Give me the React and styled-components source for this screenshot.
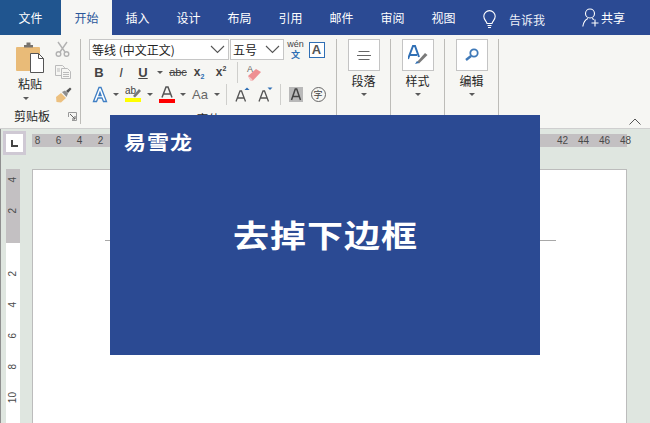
import React from "react";
import styled, { createGlobalStyle } from "styled-components";

const cjk = `"Noto Sans CJK SC", "Liberation Sans", sans-serif`;

const Global = createGlobalStyle`
  html, body { margin: 0; padding: 0; background: #fff; }
  body { font-family: ${cjk}; }
`;

const Frame = styled.div`
  position: relative;
  width: 650px;
  height: 423px;
  overflow: hidden;
  display: flex;
  flex-direction: column;
`;

const TabBar = styled.div`
  height: 35px;
  flex: none;
  display: flex;
  background: #2b4a93;
  color: #fff;
  font-size: 12px;
`;

const Tab = styled.div`
  width: ${(p) => (p.$file ? 61 : 51)}px;
  display: flex;
  align-items: center;
  justify-content: center;
  box-sizing: border-box;
  background: ${(p) => (p.$file ? "#20558f" : p.$active ? "#f6f6f4" : "transparent")};
  color: ${(p) => (p.$active ? "#2b579a" : "#fff")};
`;

const TellMe = styled.div`
  margin-left: 14px;
  display: flex;
  align-items: center;
  gap: 13px;
  padding-top: 3px;
  color: #eef1f8;
`;

const Share = styled.div`
  margin-left: 37px;
  display: flex;
  align-items: center;
  gap: 2px;
`;

const Ribbon = styled.div`
  height: 94px;
  flex: none;
  box-sizing: border-box;
  padding-top: 4px;
  display: flex;
  background: #f6f6f3;
  border-bottom: 1px solid #cfcfcf;
`;

const Group = styled.div`
  width: ${(p) => p.$w}px;
  height: 85px;
  box-sizing: border-box;
  flex: none;
  border-right: 1px solid #bdbcb8;
  display: flex;
  flex-direction: column;
  align-items: center;
  color: #262626;
`;

const ClipGroup = styled(Group)`
  display: grid;
  grid-template-columns: 52px 28px;
  grid-template-rows: 69px 16px;
  justify-items: center;
  align-items: start;
`;

const PasteButton = styled.div`
  display: flex;
  flex-direction: column;
  align-items: center;
  width: 52px;
  padding-top: 2px;
  margin-left: 8px;
  font-size: 12px;
  line-height: 18px;
`;

const PasteLabel = styled.span`
  margin-top: 2px;
`;

const PasteCaret = styled.div`
  margin-top: 4px;
  margin-right: 8px;
`;

const SmallTools = styled.div`
  display: flex;
  flex-direction: column;
  gap: 8px;
  padding-top: 2px;
  margin-left: -6px;
`;

const ClipFooter = styled.div`
  grid-column: 1 / 3;
  width: 100%;
  display: flex;
  justify-content: space-between;
  align-items: center;
  box-sizing: border-box;
  padding: 0 3px 0 14px;
  font-size: 12px;
  line-height: 16px;
`;

const FontGroup = styled(Group)`
  align-items: stretch;
  padding-left: 8px;
`;

const ComboRow = styled.div`
  display: flex;
  align-items: center;
  height: 21px;
`;

const Combo = styled.div`
  width: ${(p) => p.$w}px;
  height: 21px;
  box-sizing: border-box;
  display: flex;
  align-items: center;
  justify-content: space-between;
  padding: 0 3px 0 2px;
  margin-right: 1px;
  background: #fff;
  border: 1px solid #c6c6c6;
  font-size: 12px;
  color: #222;
  white-space: nowrap;
`;

const ToolRow = styled.div`
  display: flex;
  align-items: center;
  height: 23px;
  margin-top: ${(p) => p.$top || 0}px;
`;

const Cell = styled.div`
  width: ${(p) => p.$w}px;
  height: 22px;
  flex: none;
  display: flex;
  align-items: center;
  justify-content: center;
`;

const Glyph = styled.span`
  font-family: "Liberation Sans", sans-serif;
  font-size: ${(p) => p.$size || 13}px;
  font-weight: ${(p) => (p.$bold ? 700 : 400)};
  font-style: ${(p) => (p.$italic ? "italic" : "normal")};
  text-decoration: ${(p) => p.$line || "none"};
  color: ${(p) => p.$color || "#444"};
`;

const Sub = styled.sub`
  font-size: 7px;
  color: #2b6cb0;
  line-height: 0;
`;

const Sup = styled.sup`
  font-size: 7px;
  color: #444;
  line-height: 0;
`;

const Caret = styled.span`
  display: block;
  flex: none;
  width: 0;
  height: 0;
  border-left: 3px solid transparent;
  border-right: 3px solid transparent;
  border-top: 3px solid #5a5a5a;
`;

const ToolDivider = styled.div`
  width: 1px;
  height: 21px;
  flex: none;
  background: #cfcfcc;
`;

const FontLabel = styled.div`
  text-align: center;
  font-size: 12px;
  margin-top: 6px;
  padding-right: 8px;
  line-height: 16px;
`;

const BigBox = styled.div`
  width: 32px;
  height: 32px;
  box-sizing: border-box;
  background: #fff;
  border: 1px solid #c4c4c4;
  display: flex;
  align-items: center;
  justify-content: center;
`;

const BigLabel = styled.div`
  font-size: 12px;
  line-height: 18px;
  margin: 1px 0 3px;
`;

const Collapse = styled.div`
  display: flex;
  margin: 79px 0 0 auto;
  padding-right: 9px;
  height: 7px;
`;

const Work = styled.div`
  flex: 1;
  min-height: 0;
  display: grid;
  grid-template-columns: 31px 595px 1fr;
  grid-template-rows: 40px 1fr;
  background: #dfe6e0;
  border-left: 1px solid #8f8f8f;
`;

const Corner = styled.div`
  padding: 2px 0 0 2px;
`;

const TabStop = styled.div`
  width: 23px;
  height: 24px;
  box-sizing: border-box;
  border: 3px solid #cfc9d4;
  background: #fff;
  display: flex;
  align-items: center;
  justify-content: center;
`;

const HRuler = styled.div`
  grid-column: 2 / 4;
  width: 595px;
  height: 13px;
  margin-top: 5px;
  background: #c3c0c2;
  display: flex;
`;

const HTick = styled.div`
  width: 21px;
  flex: none;
  margin-left: ${(p) => (p.$first ? -5 : 0)}px;
  text-align: center;
  font: 10px/13px "Liberation Sans", sans-serif;
  color: #4a4a4a;
`;

const VRuler = styled.div`
  width: 14px;
  margin-left: 5px;
  height: 260px;
  background: linear-gradient(#c3c0c2 74px, #fff 74px);
  display: flex;
  flex-direction: column;
  align-items: center;
`;

const VTick = styled.div`
  height: 31.2px;
  flex: none;
  margin-top: ${(p) => (p.$first ? -5 : 0)}px;
  display: flex;
  align-items: center;
  justify-content: center;
  font: 10px/1 "Liberation Sans", sans-serif;
  color: #4a4a4a;
  transform: rotate(-90deg);
`;

const Page = styled.div`
  grid-column: 2;
  width: 595px;
  height: 260px;
  box-sizing: border-box;
  background: #fff;
  border: 1px solid #bcbcbc;
  padding: 70px 0 0 72px;
`;

const HeaderRule = styled.div`
  width: 451px;
  height: 1px;
  background: #a8a8a8;
`;

const Cover = styled.div`
  position: absolute;
  left: 110px;
  top: 115px;
  width: 430px;
  height: 240px;
  background: #2b4a93;
  color: #fff;
  font-family: ${cjk};
  font-weight: 700;
`;

const Logo = styled.div`
  position: absolute;
  left: 14px;
  top: 10px;
  font-size: 22px;
  line-height: 32px;
  letter-spacing: 1px;
  transform: scaleY(0.9);
`;

const Headline = styled.div`
  position: absolute;
  left: 0;
  right: 0;
  top: 91px;
  text-align: center;
  font-size: 36px;
  line-height: 54px;
  letter-spacing: 1px;
  padding-left: 1px;
  transform: scaleY(0.85);
`;

const Chevron = ({ size = 15 }) => (
  <svg width={size} height="9" viewBox="0 0 15 9">
    <path d="M1 1l6.5 6.5L14 1" fill="none" stroke="#555" strokeWidth="1.1" />
  </svg>
);

const PasteIcon = () => (
  <svg width="30" height="32" viewBox="0 0 30 32">
    <rect x="1" y="6" width="24" height="24" rx="1" fill="#e9bb78" />
    <path d="M9 6V4h2.500V1.500h4V4H18v2.500H9z" fill="#77736e" />
    <path d="M15.500 12.500h8l5 5v14h-13z" fill="#fff" stroke="#555" />
    <path d="M23.500 12.500v5h5" fill="none" stroke="#555" />
  </svg>
);

const Scissors = () => (
  <svg width="15" height="16" viewBox="0 0 15 16" fill="none" stroke="#b2b2b2" strokeWidth="1.4">
    <path d="M3 1l7 10M12 1L5 11" />
    <circle cx="3.500" cy="13" r="2.300" />
    <circle cx="11.500" cy="13" r="2.300" />
  </svg>
);

const CopyIcon = () => (
  <svg width="16" height="14" viewBox="0 0 16 14" fill="#f6f6f3" stroke="#bbb">
    <path d="M.5.500h7l2 2v8h-9z" />
    <path d="M6.500 3.500h6l3 3v7h-9z" />
    <path d="M8 7.500h6M8 9.500h6M8 11.500h6M2 4h3M2 6h3" />
  </svg>
);

const Painter = () => (
  <svg width="17" height="16" viewBox="0 0 17 16">
    <path d="M1 10l5-4 5 5-5 4.500L1.500 15z" fill="#ecc07f" />
    <path d="M7 5l3-1.500 3 3L11.500 10z" fill="#8e8e8e" />
    <path d="M11 4l4-3.500 1.500 1.500-3.500 4z" fill="#555" />
  </svg>
);

const DialogMark = () => (
  <svg width="9" height="9" viewBox="0 0 9 9" fill="none" stroke="#666">
    <path d="M.5 5V.5h8v8H4" stroke="#999" />
    <path d="M2 2l5 5M7 4v3H4" />
  </svg>
);

const TextEffect = () => (
  <svg width="16" height="17" viewBox="0 0 16 17">
    <path d="M1.500 15.500L7 1.500h2l5.500 14h-3L10 12H6l-1.500 3.500zM6.900 9.500h2.200L8 6.500z" fill="#fff" stroke="#3f7fc4" strokeWidth="1.300" />
  </svg>
);

const Highlight = () => (
  <svg width="17" height="18" viewBox="0 0 17 18">
    <text x="0" y="9" fontFamily="Liberation Sans" fontSize="10" fill="#444">ab</text>
    <path d="M8 11l6-7 2 2-6 6.500z" fill="#777" />
    <rect x="0" y="13" width="16" height="4" fill="#ffff00" />
  </svg>
);

const FontColor = () => (
  <svg width="16" height="17" viewBox="0 0 16 17">
    <path d="M3 11.500L7 1h2l4 10.500M4.700 8h6.600" fill="none" stroke="#555" strokeWidth="1.500" />
    <rect x="0" y="13" width="16" height="4" fill="#f00" />
  </svg>
);

const Eraser = () => (
  <svg width="17" height="17" viewBox="0 0 17 17">
    <text x="1" y="8" fontFamily="Liberation Sans" fontSize="9" fill="#666">A</text>
    <path d="M2 12l8-7 5 3-8 8.500H4.500z" fill="#ee8f92" />
    <path d="M2 12l3 2 2 2.500H4.500z" fill="#f7c9c9" />
  </svg>
);

const SizeStep = ({ up }) => (
  <svg width="15" height="15" viewBox="0 0 15 15">
    <path d="M1 14.500L5 4h1.500l4 10.500M2.500 11h6.500" fill="none" stroke="#555" strokeWidth="1.300" />
    <path d={up ? "M9.500 3l2.500-2.500L14.500 3z" : "M9.500.5l2.500 2.500L14.500.5z"} fill="#2f6fb5" />
  </svg>
);

const ShadedA = () => (
  <svg width="14" height="15" viewBox="0 0 14 15">
    <rect width="14" height="15" fill="#b9b9b9" />
    <path d="M2.500 13L6.300 2h1.400l3.800 11M4 9.500h6" fill="none" stroke="#444" strokeWidth="1.500" />
  </svg>
);

const CircledChar = styled.span`
  width: 15px;
  height: 15px;
  box-sizing: border-box;
  border: 1px solid #666;
  border-radius: 50%;
  display: flex;
  align-items: center;
  justify-content: center;
  font-size: 9px;
  color: #444;
`;

const Phonetic = styled.div`
  display: flex;
  flex-direction: column;
  align-items: center;
  line-height: 9px;
  font-size: 9px;
  color: #444;
  font-family: "Liberation Sans", sans-serif;
`;

const PhoneticChar = styled.span`
  color: #2f6fb5;
  font-family: ${cjk};
  font-weight: 700;
  line-height: 11px;
`;

const BoxedA = styled.div`
  width: 16px;
  height: 16px;
  box-sizing: border-box;
  border: 1px solid #2f6fb5;
  background: #fff;
  display: flex;
  align-items: center;
  justify-content: center;
  font: 700 13px "Liberation Sans", sans-serif;
  color: #555;
`;

const AlignIcon = () => (
  <svg width="14" height="9" viewBox="0 0 14 9" stroke="#666">
    <path d="M1.500 .5h11M0 4.500h14M1.500 8.500h11" />
  </svg>
);

const StylesIcon = () => (
  <svg width="20" height="20" viewBox="0 0 20 20">
    <path d="M0 14L5 1h2l4 11M2 10h7" fill="none" stroke="#2f6fb5" strokeWidth="2" />
    <path d="M9 17l8-9 2.500 2-8.500 8.500z" fill="#7a7a7a" />
    <path d="M7 19l2-3 2 2z" fill="#2f6fb5" />
  </svg>
);

const SearchIcon = () => (
  <svg width="14" height="14" viewBox="0 0 14 14" fill="none">
    <circle cx="9" cy="5" r="3.700" stroke="#3f79b8" strokeWidth="1.800" />
    <path d="M6 8l-5 4" stroke="#3f79b8" strokeWidth="2.500" />
  </svg>
);

const Bulb = () => (
  <svg width="13" height="19" viewBox="0 0 13 19" fill="none" stroke="#fff" strokeWidth="1.100">
    <path d="M4 13.500C3.500 11 .8 10 .8 6.300a5.700 5.700 0 0 1 11.400 0C12.200 10 9.500 11 9 13.500z" />
    <path d="M4.500 15.500h4M5 17.500h3" />
  </svg>
);

const Person = () => (
  <svg width="17" height="19" viewBox="0 0 17 19" fill="none" stroke="#fff" strokeWidth="1.100">
    <circle cx="8" cy="5.500" r="4.500" />
    <path d="M.8 18.500C1.500 14 3.500 11.500 6 10.500M10 10.500l2 1M13 11.500v7M9.500 15h7" />
  </svg>
);

const CollapseIcon = () => (
  <svg width="12" height="7" viewBox="0 0 12 7">
    <path d="M.5 6.500L6 1l5.500 5.500" fill="none" stroke="#555" />
  </svg>
);

const LMark = () => (
  <svg width="7" height="7" viewBox="0 0 7 7">
    <path d="M0 0h2v5h5v2H0z" fill="#444" />
  </svg>
);

const tabs = ["插入", "设计", "布局", "引用", "邮件", "审阅", "视图"];
// the middle of the ruler sits behind the cover, only both ends show
const hNumbers = [8, 6, 4, 2, ...Array(21).fill(""), 42, 44, 46, 48];
const vNumbers = [4, 2, "", 2, 4, 6, 8, 10];

const bigGroups = [
  { label: "段落", w: 54, icon: <AlignIcon /> },
  { label: "样式", w: 54, icon: <StylesIcon /> },
  { label: "编辑", w: 54, icon: <SearchIcon /> },
];

export default function App() {
  return (
    <Frame>
      <Global />
      <TabBar>
        <Tab $file>文件</Tab>
        <Tab $active>开始</Tab>
        {tabs.map((t) => (
          <Tab key={t}>{t}</Tab>
        ))}
        <TellMe>
          <Bulb />
          <span>告诉我</span>
        </TellMe>
        <Share>
          <Person />
          <span>共享</span>
        </Share>
      </TabBar>

      <Ribbon>
        <ClipGroup $w={81}>
          <PasteButton>
            <PasteIcon />
            <PasteLabel>粘贴</PasteLabel>
            <PasteCaret>
              <Caret />
            </PasteCaret>
          </PasteButton>
          <SmallTools>
            <Scissors />
            <CopyIcon />
            <Painter />
          </SmallTools>
          <ClipFooter>
            <span>剪贴板</span>
            <DialogMark />
          </ClipFooter>
        </ClipGroup>

        <FontGroup $w={256}>
          <ComboRow>
            <Combo $w={140}>
              <span>等线 (中文正文)</span>
              <Chevron />
            </Combo>
            <Combo $w={54}>
              <span>五号</span>
              <Chevron />
            </Combo>
            <Cell $w={21}>
              <Phonetic>
                wén
                <PhoneticChar>文</PhoneticChar>
              </Phonetic>
            </Cell>
            <Cell $w={21}>
              <BoxedA>A</BoxedA>
            </Cell>
          </ComboRow>
          <ToolRow $top={1}>
            <Cell $w={20}><Glyph $bold $size={13}>B</Glyph></Cell>
            <Cell $w={24}><Glyph $italic $size={13}>I</Glyph></Cell>
            <Cell $w={20}><Glyph $bold $size={13} $line="underline">U</Glyph></Cell>
            <Cell $w={14}><Caret /></Cell>
            <Cell $w={22}><Glyph $size={11} $line="line-through">abc</Glyph></Cell>
            <Cell $w={20}><Glyph $bold $size={12}>x<Sub>2</Sub></Glyph></Cell>
            <Cell $w={24}><Glyph $bold $size={12}>x<Sup>2</Sup></Glyph></Cell>
            <Cell $w={4} />
            <ToolDivider />
            <Cell $w={32}><Eraser /></Cell>
          </ToolRow>
          <ToolRow>
            <Cell $w={22}><TextEffect /></Cell>
            <Cell $w={9}><Caret /></Cell>
            <Cell $w={26}><Highlight /></Cell>
            <Cell $w={7}><Caret /></Cell>
            <Cell $w={28}><FontColor /></Cell>
            <Cell $w={4}><Caret /></Cell>
            <Cell $w={30}><Glyph $size={13} $color="#666">Aa</Glyph></Cell>
            <Cell $w={4}><Caret /></Cell>
            <Cell $w={7} />
            <ToolDivider />
            <Cell $w={30}><SizeStep up /></Cell>
            <Cell $w={16}><SizeStep /></Cell>
            <Cell $w={7} />
            <ToolDivider />
            <Cell $w={29}><ShadedA /></Cell>
            <Cell $w={16}><CircledChar>字</CircledChar></Cell>
          </ToolRow>
          <FontLabel>字体</FontLabel>
        </FontGroup>

        {bigGroups.map((g) => (
          <Group key={g.label} $w={g.w}>
            <BigBox>{g.icon}</BigBox>
            <BigLabel>{g.label}</BigLabel>
            <Caret />
          </Group>
        ))}

        <Collapse>
          <CollapseIcon />
        </Collapse>
      </Ribbon>

      <Work>
        <Corner>
          <TabStop>
            <LMark />
          </TabStop>
        </Corner>
        <HRuler>
          {hNumbers.map((n, i) => (
            <HTick key={i} $first={i === 0}>{n}</HTick>
          ))}
        </HRuler>
        <VRuler>
          {vNumbers.map((n, i) => (
            <VTick key={i} $first={i === 0}>{n}</VTick>
          ))}
        </VRuler>
        <Page>
          <HeaderRule />
        </Page>
      </Work>

      <Cover>
        <Logo>易雪龙</Logo>
        <Headline>去掉下边框</Headline>
      </Cover>
    </Frame>
  );
}
